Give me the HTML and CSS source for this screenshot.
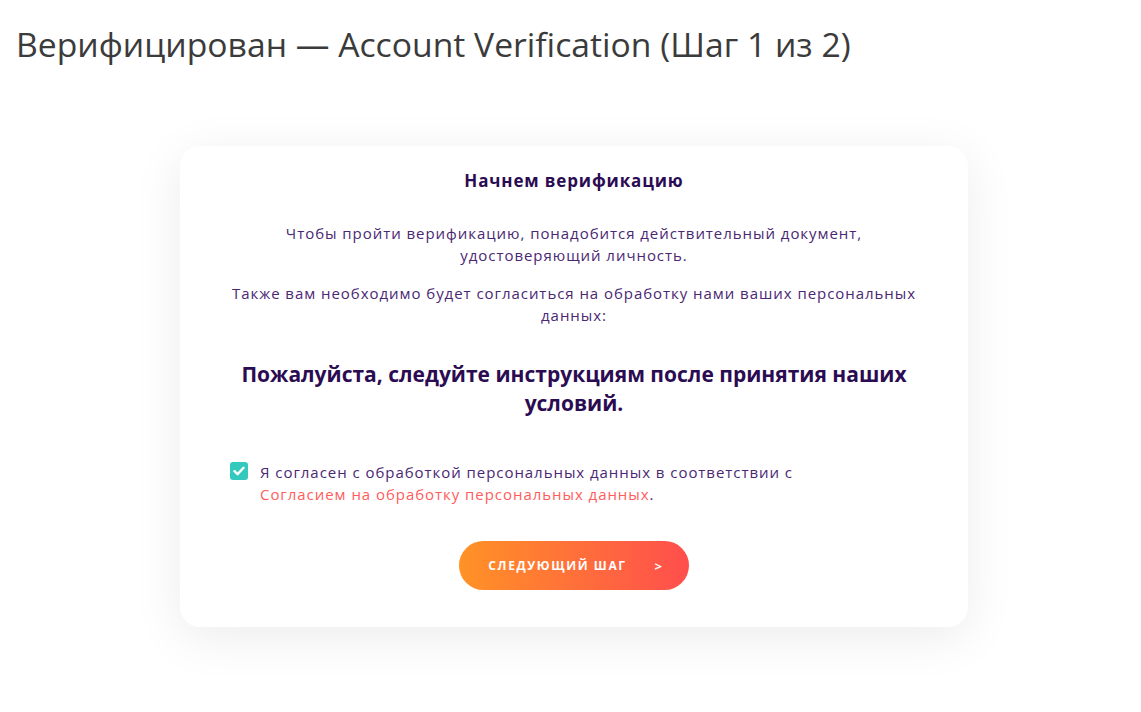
FILE: index.html
```html
<!DOCTYPE html>
<html lang="ru">
<head>
<meta charset="utf-8">
<title>Верификация</title>
<link rel="stylesheet" href="styles.css">
</head>
<body>
<h1 class="page-title">Верифицирован — Account Verification (Шаг 1 из 2)</h1>
<main class="wrap">
  <section class="card">
    <h2 class="card-title">Начнем верификацию</h2>
    <p class="text">Чтобы пройти верификацию, понадобится действительный документ, удостоверяющий личность.</p>
    <p class="text">Также вам необходимо будет согласиться на обработку нами ваших персональных данных:</p>
    <h3 class="notice">Пожалуйста, следуйте инструкциям после принятия наших условий.</h3>
    <label class="agree">
      <span class="check"><svg width="12" height="10" viewBox="0 0 12 10"><path d="M1.5 5.2 4.6 8.2 10.5 1.8" fill="none" stroke="#fff" stroke-width="2.4" stroke-linecap="round" stroke-linejoin="round"/></svg></span>
      <span class="agree-text">Я согласен с обработкой персональных данных в соответствии с <a class="link" href="#">Согласием на обработку персональных данных</a>.</span>
    </label>
    <div class="actions">
      <button class="btn" type="button"><span>Следующий шаг</span><span class="arrow">&gt;</span></button>
    </div>
  </section>
</main>
</body>
</html>
```
FILE: styles.css
```css
html, body { margin: 0; padding: 0; background: #fff; }
body { font-family: "Open Sans", "Noto Sans", sans-serif; }
.page-title {
  margin: 0;
  padding: 22px 16px 0;
  font-family: "Open Sans", sans-serif;
  font-weight: 400;
  font-size: 33.7px;
  line-height: 44px;
  color: #3b3b3b;
}
.wrap {
  display: flex;
  justify-content: center;
  padding: 80px 0 85px 7px;
}
.card {
  width: 788px;
  box-sizing: border-box;
  padding: 24px 50px 37px;
  background: #fff;
  border-radius: 20px;
  box-shadow: 0 10px 50px rgba(0,0,0,0.08);
  text-align: center;
  font-family: "Open Sans", sans-serif;
}
.card-title {
  margin: 0 0 30px;
  font-size: 17px;
  line-height: 22px;
  font-weight: 700;
  letter-spacing: 0.85px;
  color: #2b0c52;
}
.text {
  margin: 0 0 16px;
  font-size: 15px;
  line-height: 22px;
  letter-spacing: 0.95px;
  color: #4a2873;
}
.notice {
  margin: 34px 0 0;
  font-size: 21px;
  line-height: 29px;
  font-weight: 700;
  color: #2b0c52;
}
.agree {
  display: flex;
  align-items: flex-start;
  gap: 12px;
  margin-top: 43px;
  text-align: left;
}
.check {
  flex: none;
  width: 18px;
  height: 18px;
  margin-top: 1px;
  border-radius: 3px;
  background: #33c9bd;
  display: flex;
  align-items: center;
  justify-content: center;
}
.agree-text {
  max-width: 580px;
  font-size: 15px;
  line-height: 22px;
  letter-spacing: 0.95px;
  color: #4a2873;
}
.link { color: #ff5c5c; text-decoration: none; }
.actions { display: flex; justify-content: center; margin-top: 36px; }
.btn {
  width: 230px;
  height: 49px;
  border: 0;
  border-radius: 25px;
  background: linear-gradient(90deg, #ff9226 0%, #ff4e4d 100%);
  color: #fff;
  font-family: "Open Sans", sans-serif;
  font-size: 12px;
  font-weight: 700;
  letter-spacing: 1.6px;
  text-transform: uppercase;
  display: flex;
  align-items: center;
  justify-content: center;
  gap: 28px;
  padding: 0 0 0 4px;
}
.arrow { font-size: 13px; }
```
